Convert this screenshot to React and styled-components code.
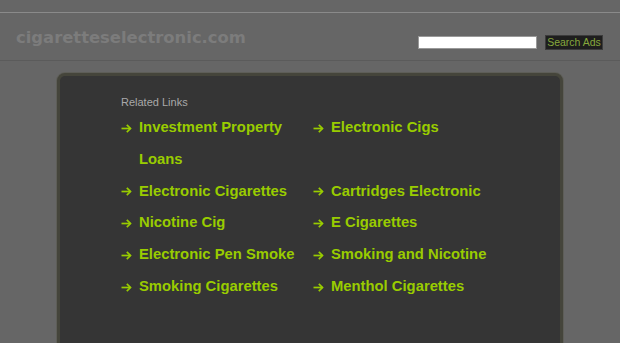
import React from 'react';
import styled, { createGlobalStyle } from 'styled-components';

const GlobalStyle = createGlobalStyle`
  body {
    margin: 0;
    background: #666666;
    font-family: "Liberation Sans", Arial, sans-serif;
  }
`;

const TopBar = styled.div`
  height: 12px;
  border-bottom: 1px solid #8a8a8a;
`;

const Header = styled.div`
  height: 47px;
  border-bottom: 1px solid #5b5b5b;
  display: flex;
  align-items: center;
  justify-content: space-between;
  padding: 0 17px 0 16px;
`;

const Logo = styled.div`
  font-family: "DejaVu Sans", Verdana, sans-serif;
  font-size: 16.4px;
  font-weight: bold;
  color: #7c7c7c;
  margin-top: 2px;
`;

const SearchForm = styled.form`
  display: flex;
  align-items: center;
  gap: 8px;
  margin-top: 12px;
`;

const SearchInput = styled.input`
  width: 119px;
  height: 13px;
  padding: 0 1px;
  box-sizing: border-box;
  border: 1px solid #999;
  background: #fff;
  outline: none;
`;

const SearchButton = styled.button`
  width: 58px;
  height: 15px;
  padding: 0;
  box-sizing: border-box;
  background: #1e1e1e;
  border: 1px solid #3c3c3c;
  color: #86a83c;
  font-family: "Liberation Sans", Arial, sans-serif;
  font-size: 10.5px;
  line-height: 13px;
  white-space: nowrap;
`;

const Panel = styled.div`
  width: 506px;
  height: 280px;
  margin: 12px 0 0 57px;
  background: #353535;
  border: 3px solid #45453b;
  border-radius: 8px;
  box-shadow: 0 0 0 1px #5e5e58;
  padding: 20px 0 0 61px;
  box-sizing: border-box;
`;

const Title = styled.div`
  font-size: 11px;
  color: #a9a9a9;
  line-height: 13px;
  margin-bottom: 3px;
`;

const LinkGrid = styled.div`
  display: grid;
  grid-template-columns: 192px 192px;
`;

const LinkItem = styled.a`
  display: flex;
  align-items: flex-start;
  color: #99cc00;
  text-decoration: none;
  font-size: 14.8px;
  font-weight: bold;
  line-height: 31.8px;
`;

const Arrow = styled.span`
  width: 18px;
  height: 31.8px;
  flex: none;
  display: flex;
  align-items: center;
  padding-top: 1px;
  box-sizing: border-box;
`;

const ArrowIcon = () => (
  <svg width="11" height="9" viewBox="0 0 11 9" fill="none" stroke="currentColor" strokeWidth="1.7">
    <path d="M0.5 4.5H9.5" />
    <path d="M5.8 0.8L9.5 4.5L5.8 8.2" />
  </svg>
);

const links = [
  'Investment Property Loans',
  'Electronic Cigs',
  'Electronic Cigarettes',
  'Cartridges Electronic',
  'Nicotine Cig',
  'E Cigarettes',
  'Electronic Pen Smoke',
  'Smoking and Nicotine',
  'Smoking Cigarettes',
  'Menthol Cigarettes',
];

export default function App() {
  return (
    <>
      <GlobalStyle />
      <TopBar />
      <Header>
        <Logo>cigaretteselectronic.com</Logo>
        <SearchForm onSubmit={(e) => e.preventDefault()}>
          <SearchInput type="text" />
          <SearchButton type="submit">Search Ads</SearchButton>
        </SearchForm>
      </Header>
      <Panel>
        <Title>Related Links</Title>
        <LinkGrid>
          {links.map((l) => (
            <LinkItem key={l} href="#">
              <Arrow>
                <ArrowIcon />
              </Arrow>
              <span>{l}</span>
            </LinkItem>
          ))}
        </LinkGrid>
      </Panel>
    </>
  );
}
